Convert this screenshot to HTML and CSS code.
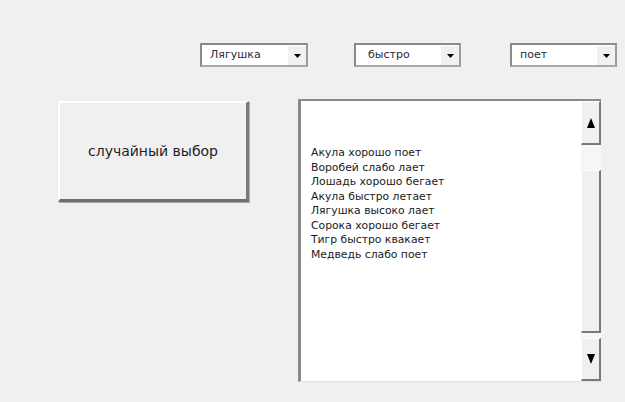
FILE: index.html
```html
<!DOCTYPE html>
<html lang="ru">
<head>
<meta charset="utf-8">
<link rel="stylesheet" href="styles.css">
</head>
<body>
<div class="page">
  <div class="combos">
    <div class="combo c1"><span class="val">Лягушка</span><span class="drop"><svg width="7" height="4" viewBox="0 0 7 4"><path d="M0 0H7L3.5 4Z" fill="#000"/></svg></span></div>
    <div class="combo c2"><span class="val v2">быстро</span><span class="drop"><svg width="7" height="4" viewBox="0 0 7 4"><path d="M0 0H7L3.5 4Z" fill="#000"/></svg></span></div>
    <div class="combo c3"><span class="val">поет</span><span class="drop"><svg width="7" height="4" viewBox="0 0 7 4"><path d="M0 0H7L3.5 4Z" fill="#000"/></svg></span></div>
  </div>
  <div class="main">
    <div class="btn">случайный выбор</div>
    <div class="listbox">
      <div class="items">
        <div>Акула хорошо поет</div>
        <div>Воробей слабо лает</div>
        <div>Лошадь хорошо бегает</div>
        <div>Акула быстро летает</div>
        <div>Лягушка высоко лает</div>
        <div>Сорока хорошо бегает</div>
        <div>Тигр быстро квакает</div>
        <div>Медведь слабо поет</div>
      </div>
      <div class="scroll">
        <div class="sbtn up"><svg width="8" height="10" viewBox="0 0 8 10"><path d="M4 0L8 10H0Z" fill="#000"/></svg></div>
        <div class="track t1"></div>
        <div class="thumb"></div>
        <div class="track t2"></div>
        <div class="sbtn down"><svg width="8" height="10" viewBox="0 0 8 10"><path d="M0 0H8L4 10Z" fill="#000"/></svg></div>
      </div>
    </div>
  </div>
</div>
</body>
</html>
```
FILE: styles.css
```css
html, body {
  margin: 0;
  padding: 0;
  background: #f0f0f0;
}
.page {
  width: 625px;
  height: 402px;
  overflow: hidden;
  padding-top: 43px;
  box-sizing: border-box;
  font-family: "DejaVu Sans", "Liberation Sans", sans-serif;
  color: #222;
}
.combos {
  display: flex;
  padding-left: 200px;
  height: 24px;
}
.combo {
  display: flex;
  box-sizing: border-box;
  height: 24px;
  background: #fff;
  border: 2px solid #8a8a8a;
  border-right-color: #9a9a9a;
  border-bottom-color: #a8a8a8;
}
.c1 { width: 108px; }
.c2 { width: 107px; margin-left: 46px; }
.c3 { width: 107px; margin-left: 49px; }
.val {
  flex: 1;
  font-size: 11px;
  line-height: 20px;
  padding-left: 8px;
  color: #2a2a3a;
}
.v2 { padding-left: 12px; }
.drop {
  width: 18px;
  display: flex;
  align-items: center;
  justify-content: center;
  background: #f0f0f0;
  border-left: 1px solid #fff;
  border-top: 1px solid #fff;
}
.main {
  display: flex;
  margin-top: 32px;
}
.btn {
  box-sizing: border-box;
  width: 191px;
  height: 101px;
  margin-left: 58px;
  margin-top: 2px;
  background: #f0f0f0;
  border-top: 2px solid #fff;
  border-left: 2px solid #fff;
  border-right: 3px solid #7a7a7a;
  border-bottom: 3px solid #6e6e6e;
  box-shadow: 1px 1px 0 #aaa;
  display: flex;
  align-items: center;
  justify-content: center;
  font-size: 14px;
  color: #1e1e28;
}
.listbox {
  box-sizing: border-box;
  width: 303px;
  height: 283px;
  margin-left: 49px;
  background: #fff;
  border-left: 3px solid #8a8a8a;
  border-top: 2px solid #8a8a8a;
  border-bottom: 1px solid #e2e2e2;
  display: flex;
}
.items {
  flex: 1;
  padding-top: 45px;
  padding-left: 10px;
  font-size: 10.8px;
  line-height: 14.5px;
  color: #1a1a1a;
}
.scroll {
  width: 20px;
  display: flex;
  flex-direction: column;
  background: #f0f0f0;
}
.sbtn {
  box-sizing: border-box;
  height: 44px;
  display: flex;
  align-items: center;
  justify-content: center;
  background: #f0f0f0;
  border-right: 2px solid #7a7a7a;
  border-bottom: 2px solid #7a7a7a;
  border-left: 1px solid #fff;
  border-top: 1px solid #fff;
}
.down { height: 43px; }
.track { background: #f6f6f6; }
.t1 { height: 25px; }
.t2 { height: 5px; }
.thumb {
  flex: 1;
  box-sizing: border-box;
  background: #f0f0f0;
  border-right: 2px solid #7a7a7a;
  border-bottom: 2px solid #7a7a7a;
  border-left: 1px solid #fff;
  border-top: 1px solid #fff;
}
```
